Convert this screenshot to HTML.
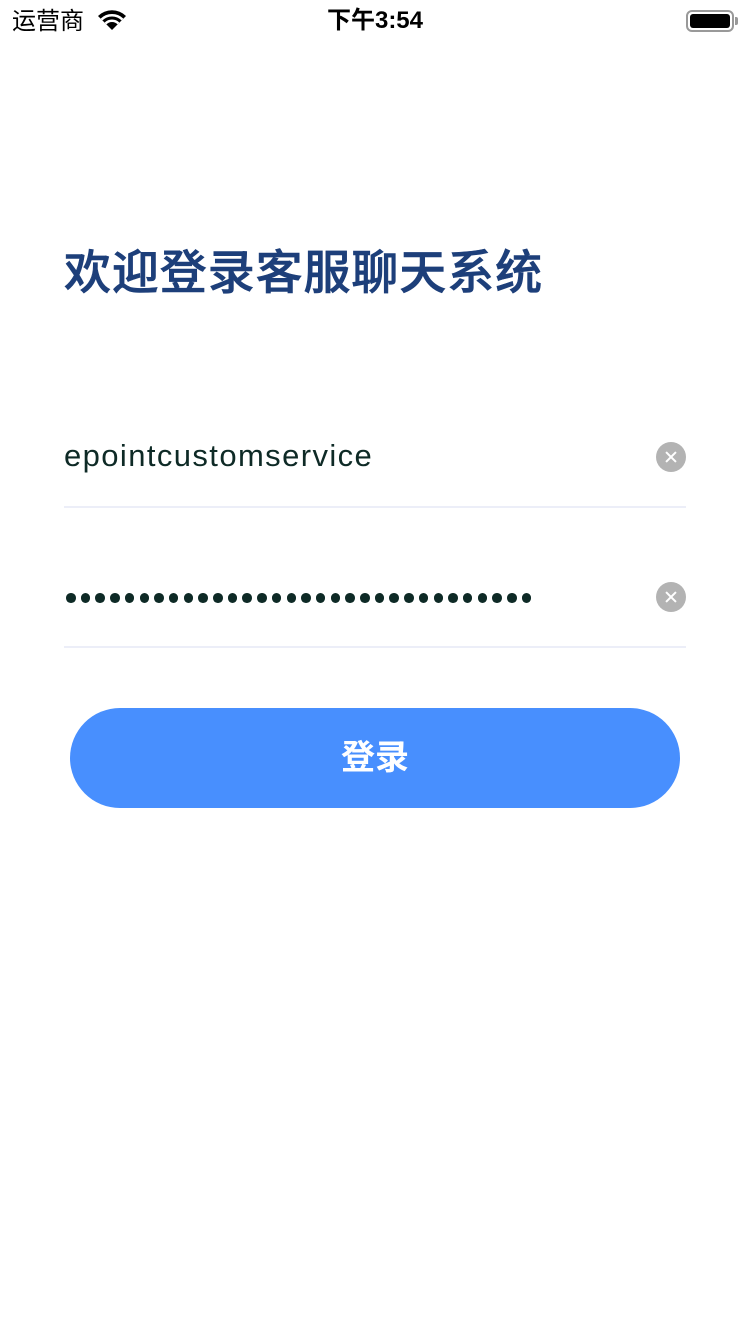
<!DOCTYPE html>
<html><head><meta charset="utf-8"><style>
*{margin:0;padding:0;box-sizing:border-box}
body{width:750px;height:1334px;background:#fff;position:relative;overflow:hidden;font-family:"Liberation Sans","Noto Sans CJK SC",sans-serif}
.a{position:absolute;white-space:nowrap}
.clr{position:absolute;left:656px;width:30px;height:30px;border-radius:50%;background:#b3b3b3}
.clr:before,.clr:after{content:"";position:absolute;left:8px;top:14px;width:14px;height:2px;background:#fff;transform:rotate(45deg)}
.clr:after{transform:rotate(-45deg)}
.line{position:absolute;left:64px;width:622px;height:2px;background:#eceef8}
.dot{position:absolute;top:593px;width:10px;height:10px;border-radius:50%;background:#0e2a26}
</style></head><body>
<div class="a" style="left:12px;top:7px;font-size:24px;line-height:30px;color:#000">运营商</div>
<svg class="a" style="left:96px;top:9px" width="32" height="22" viewBox="0 0 32 22"><path d="M16 21 L2 7 A20 20 0 0 1 30 7 Z" fill="#000"/><path d="M5.5 10.5 A15 15 0 0 1 26.5 10.5" stroke="#fff" stroke-width="2.5" fill="none"/><path d="M9.5 14.5 A9 9 0 0 1 22.5 14.5" stroke="#fff" stroke-width="2.5" fill="none"/></svg>
<div class="a" style="left:0;width:750px;text-align:center;top:6px;font-size:24px;line-height:30px;font-weight:bold;color:#000">下午3:54</div>
<div class="a" style="left:686px;top:10px;width:48px;height:22px;border:2px solid #999;border-radius:6px"><div style="position:absolute;left:2px;top:2px;width:40px;height:14px;background:#000;border-radius:3px"></div></div>
<div class="a" style="left:735px;top:17px;width:3px;height:8px;background:#999;border-radius:0 2px 2px 0"></div>
<div class="a" style="left:64px;top:244px;font-size:47px;line-height:58px;font-weight:500;color:#1d3f7a;letter-spacing:0.9px;-webkit-text-stroke:0.6px #1d3f7a">欢迎登录客服聊天系统</div>
<div class="a" style="left:64px;top:437px;font-size:31px;line-height:38px;color:#0e2a26;letter-spacing:1.4px">epointcustomservice</div>
<div class="clr" style="top:442px"></div>
<div class="line" style="top:506px"></div>
<div id="dots"></div>
<div class="clr" style="top:582px"></div>
<div class="line" style="top:646px"></div>
<div class="a" style="left:70px;top:708px;width:610px;height:100px;border-radius:50px;background:#488ffe;color:#fff;font-size:34px;font-weight:bold;text-align:center;line-height:100px">登录</div>
<script>
var h='';for(var i=0;i<32;i++)h+='<div class="dot" style="left:'+(66+i*14.7)+'px;width:9.5px;height:9.5px"></div>';document.getElementById('dots').innerHTML=h;
</script>
</body></html>
